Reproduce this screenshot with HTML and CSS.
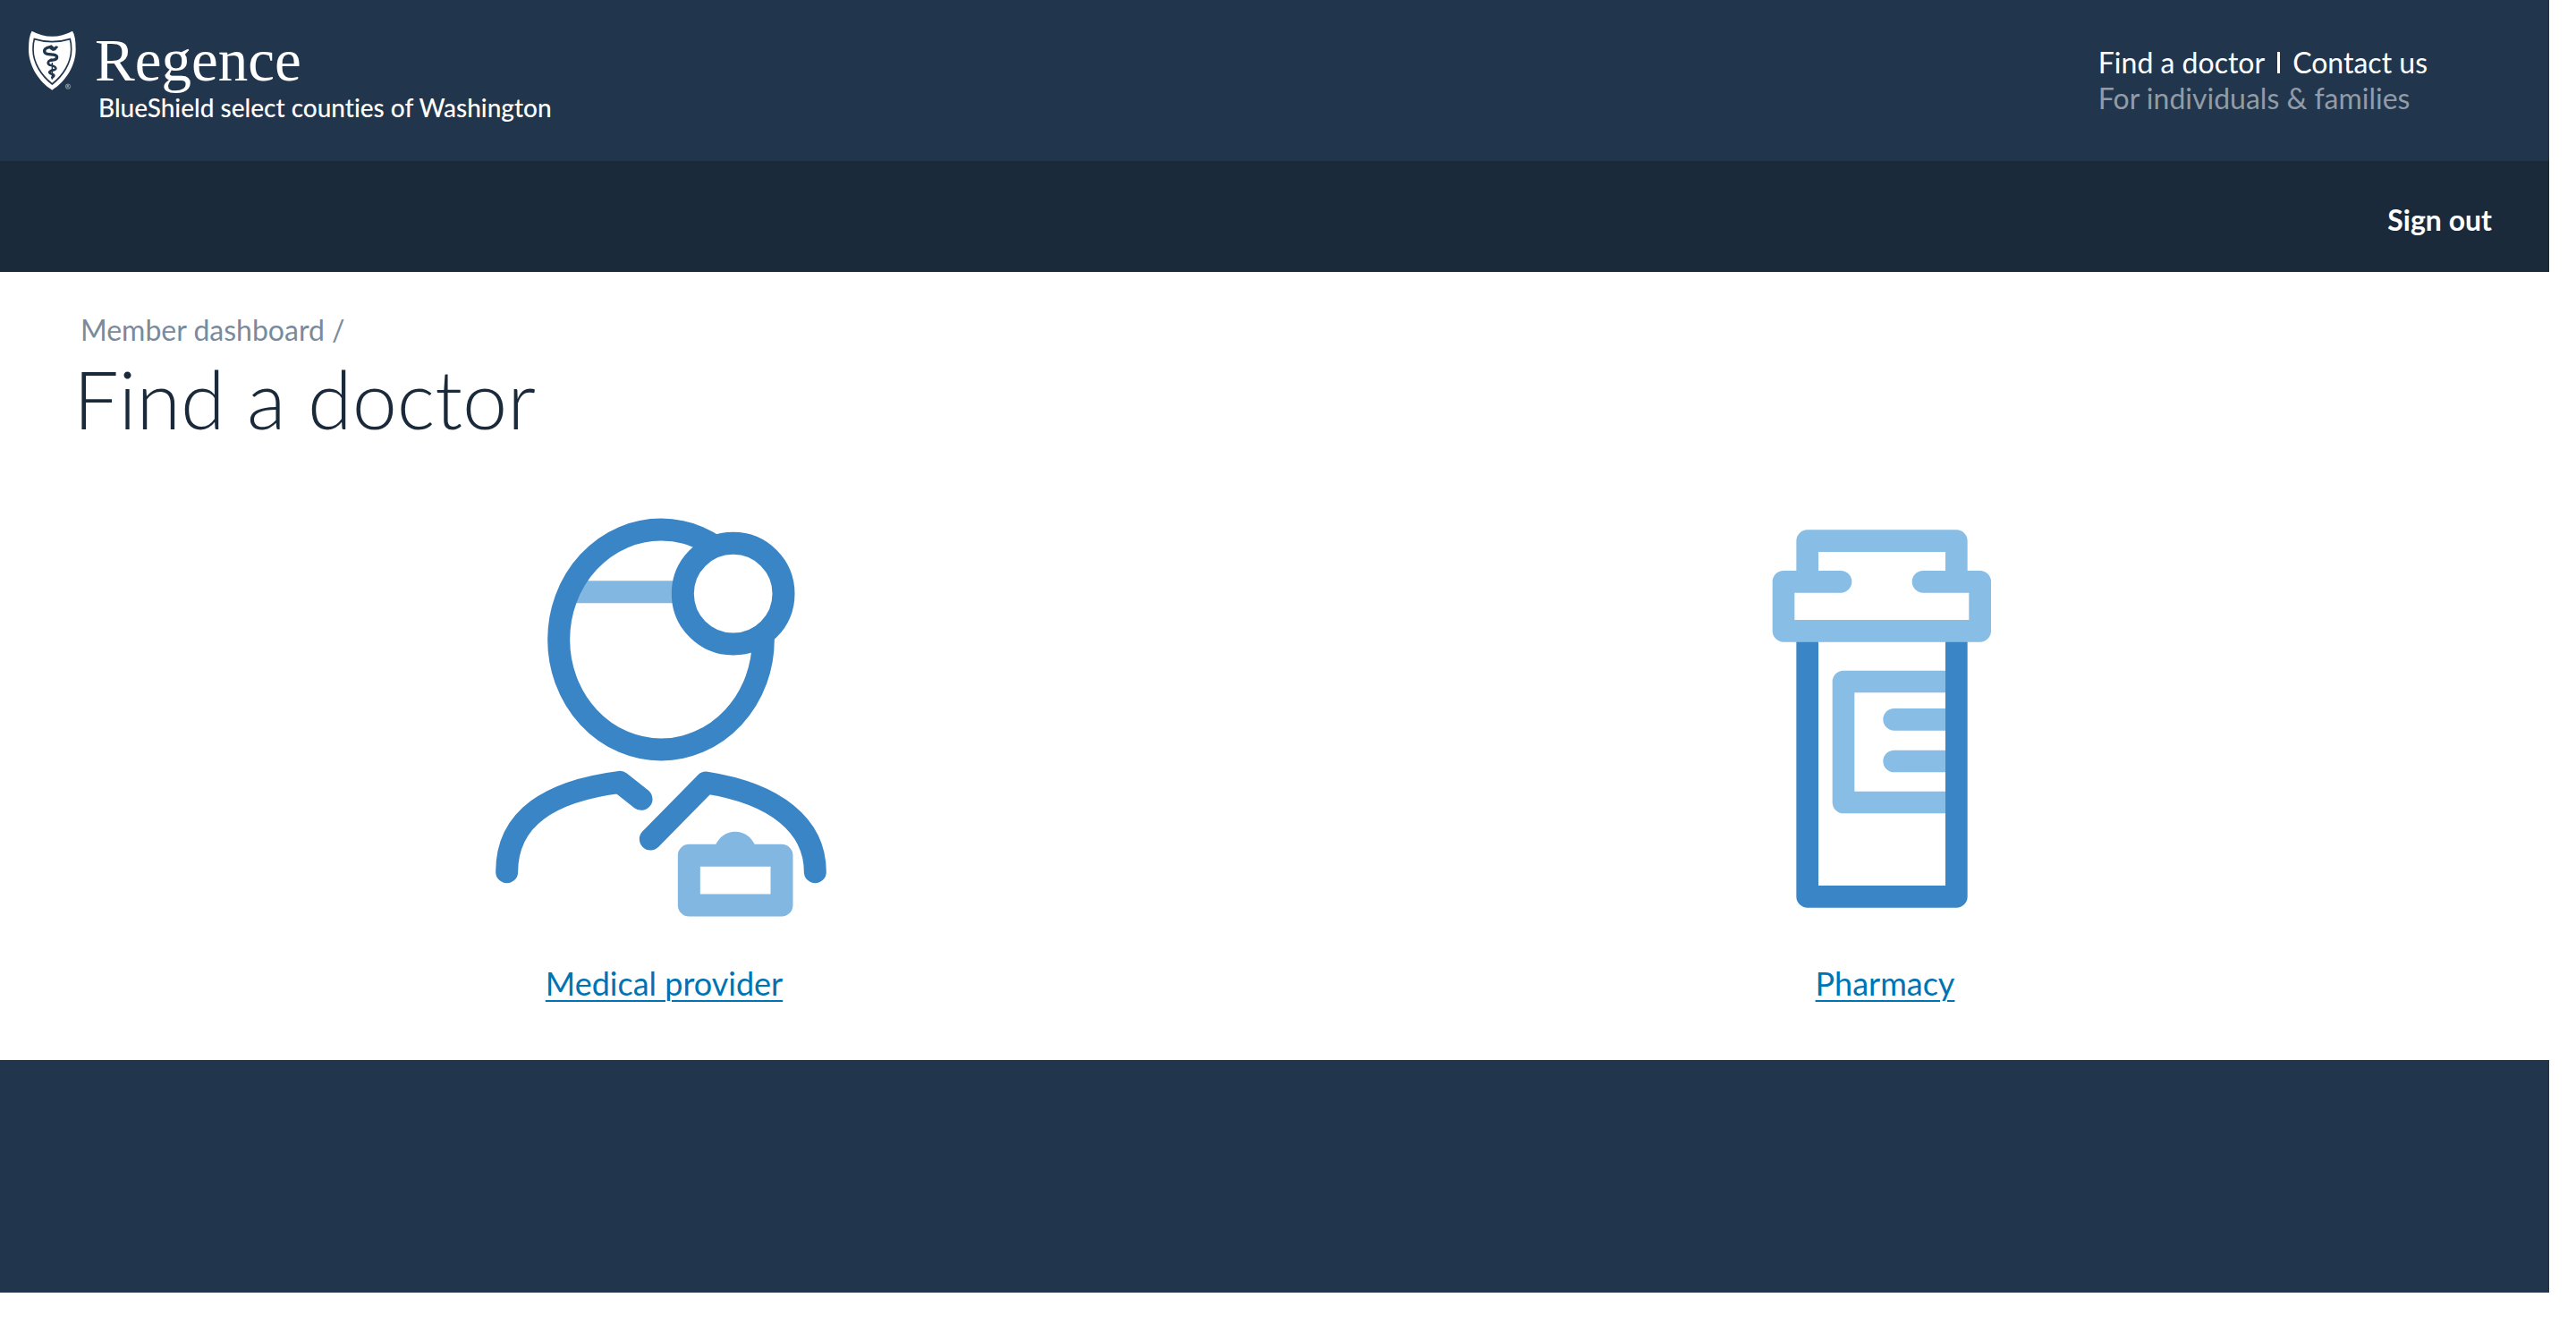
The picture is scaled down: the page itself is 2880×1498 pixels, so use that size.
FILE: index.html
```html
<!DOCTYPE html>
<html lang="en">
<head>
<meta charset="utf-8">
<meta name="viewport" content="width=device-width, initial-scale=1">
<title>Find a doctor - Regence</title>
<link rel="stylesheet" href="styles.css">
</head>
<body>
<header class="masthead">
  <div class="brand">
    <svg class="brand-shield" viewBox="30 36 192 216" aria-hidden="true">
      <path fill="#fff" d="M47 44Q80 62 115 62T183 44Q194 60 194 106C194 162 158 216 115 242C72 216 36 162 36 106Q36 60 47 44Z"/>
      <path fill="none" stroke="#21364d" stroke-width="5" d="M55 71Q84 80 115 80T175 71Q179 84 179 106C179 151 151 194 115 222C79 194 51 151 51 106Q51 84 55 71Z"/>
      <path fill="none" stroke="#21364d" stroke-width="4" d="M115 150V206"/>
      <path fill="none" stroke="#21364d" stroke-width="10" stroke-linecap="round" d="M109 98C94 98 85 108 91 117C99 127 130 118 131 132C131 142 107 143 112 141"/>
      <path fill="none" stroke="#21364d" stroke-width="8" stroke-linecap="round" d="M112 142C100 143 98 154 107 158C117 160 128 162 127 170C126 176 108 174 106 182C106 190 121 187 121 193C121 198 117 199 115 200"/>
      <path fill="#21364d" d="M103 94L113 91L121 98L128 94L136 97L126 109L117 111L108 105Z"/>
      <circle cx="168" cy="230" r="8" fill="none" stroke="#b8c1ca" stroke-width="2"/>
      <path fill="none" stroke="#b8c1ca" stroke-width="2" d="M165 235V226H169Q172 228 169 230H165M169 230L172 235"/>
    </svg>
    <div class="brand-text">
      <span class="brand-name">Regence</span>
      <span class="brand-region">BlueShield select counties of Washington</span>
    </div>
  </div>
  <div class="utility">
    <nav class="utility-links" aria-label="Utility">
      <a href="#find">Find a doctor</a>
      <span class="divider"></span>
      <a href="#contact">Contact us</a>
    </nav>
    <a class="audience" href="#individuals">For individuals &amp; families</a>
  </div>
</header>
<nav class="account-bar" aria-label="Account">
  <a class="sign-out" href="#signout">Sign out</a>
</nav>
<main class="content">
  <nav class="breadcrumb" aria-label="Breadcrumb"><a href="#dashboard">Member dashboard</a> /</nav>
  <h1 class="title">Find a doctor</h1>
  <div class="choices">
    <div class="choice">
      <svg class="choice-icon" viewBox="-51 30 1440 1440" aria-hidden="true" fill="none" stroke="#3a85c6" stroke-width="75" stroke-linecap="round" stroke-linejoin="round">
        <path stroke="#82b7e1" stroke-linecap="butt" d="M370 332H720"/>
        <ellipse cx="657" cy="492" rx="343" ry="369"/>
        <circle cx="899" cy="338" r="169" fill="#fff"/>
        <path d="M140 1271C140 1090 285 1000 519 970L591 1027"/>
        <path d="M622 1161L808 972C1040 1008 1174 1115 1174 1271"/>
        <rect x="751" y="1216" width="311" height="167" stroke="#82b7e1"/>
        <path fill="#82b7e1" stroke="none" d="M838 1185C864 1120 948 1120 974 1185Z"/>
      </svg>
      <a class="choice-link" href="#medical">Medical provider</a>
    </div>
    <div class="choice">
      <svg class="choice-icon" viewBox="-216 0 1440 1440" aria-hidden="true" fill="none" stroke="#88bde5" stroke-width="74" stroke-linecap="round" stroke-linejoin="round">
        <path d="M720 603H363V1008H720M533 730H720M533 870H720"/>
        <path stroke="#3a85c6" stroke-linecap="butt" d="M242 450V1324H742V450"/>
        <path d="M242 268V131H742V268M354 268H162V433H821V268H630"/>
      </svg>
      <a class="choice-link" href="#pharmacy">Pharmacy</a>
    </div>
  </div>
</main>
<footer class="footer"></footer>
</body>
</html>
```
FILE: styles.css
```css
* {
  box-sizing: border-box;
}

body {
  margin: 0;
  padding-right: 30px;
  background: #fff;
  color: #1a2a3b;
  font-family: Lato, "Open Sans", sans-serif;
  font-size: 32px;
  font-variant-ligatures: none;
  line-height: 40px;
}

a {
  color: inherit;
  text-decoration: none;
}

.masthead {
  display: flex;
  justify-content: space-between;
  min-height: 180px;
  padding: 32px 136px 0 30px;
  background: #21364d;
  color: #fff;
}

.brand {
  display: flex;
  gap: 12px;
}

.brand-shield {
  width: 64px;
  height: 72px;
}

.brand-text {
  display: flex;
  flex-direction: column;
}

.brand-name {
  font-family: "Liberation Serif", serif;
  font-size: 67px;
  line-height: 70px;
}

.brand-region {
  padding-left: 4px;
  font-size: 28px;
  font-weight: 500;
  line-height: 36px;
}

.utility {
  display: flex;
  flex-direction: column;
  padding-top: 18px;
}

.utility-links {
  display: flex;
  align-items: center;
  gap: 14px;
}

.divider {
  width: 3px;
  height: 24px;
  background: #fff;
}

.audience {
  color: #929ba6;
}

.account-bar {
  display: flex;
  justify-content: flex-end;
  align-items: center;
  min-height: 124px;
  padding: 8px 64px 0 0;
  background: #1a2a3b;
}

.sign-out {
  color: #fff;
  font-weight: 700;
}

.content {
  padding: 45px 60px 66px;
}

.breadcrumb {
  padding-left: 30px;
  color: #7b8a9b;
}

.title {
  margin: 0;
  padding-left: 22px;
  font-size: 90px;
  font-weight: 300;
  line-height: 112px;
}

.choices {
  display: grid;
  grid-template-columns: 1fr 1fr;
  padding-top: 60px;
}

.choice {
  display: flex;
  flex-direction: column;
  align-items: center;
  gap: 38px;
}

.choice-icon {
  width: 480px;
  height: 480px;
}

.choice-link {
  color: #0073b3;
  font-size: 36px;
  line-height: 40px;
  text-decoration: underline;
  text-decoration-thickness: 2px;
  text-underline-offset: 5px;
}

.footer {
  min-height: 260px;
  background: #21364d;
}
```
